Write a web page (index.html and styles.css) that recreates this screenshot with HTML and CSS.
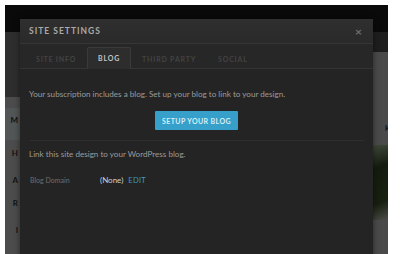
FILE: index.html
```html
<!DOCTYPE html>
<html lang="en">
<head>
  <meta charset="UTF-8" />
  <title>Site Settings</title>
  <link rel="stylesheet" href="styles.css">
</head>
<body>
  <div class="screen">
    <div class="topbar"></div>
    <div class="page">
      <div class="side side-left">
        <span class="band"></span>
        <span class="letter l-m">M</span>
        <span class="letter l-h">H</span>
        <span class="letter l-a">A</span>
        <span class="letter l-r">R</span>
        <span class="letter l-i">I</span>
      </div>
      <div class="side side-right">
        <span class="dark-top"></span>
        <span class="letter l-k">K</span>
        <span class="photo"></span>
      </div>
    </div>

    <div class="modal">
      <div class="modal-head">
        <h2>SITE SETTINGS</h2>
        <span class="close">&times;</span>
      </div>
      <div class="tabs">
        <span class="tab">SITE INFO</span>
        <span class="tab active">BLOG</span>
        <span class="tab">THIRD PARTY</span>
        <span class="tab">SOCIAL</span>
      </div>
      <div class="modal-body">
        <p>Your subscription includes a blog. Set up your blog to link to your design.</p>
        <div class="btn-row">
          <a class="btn">SETUP YOUR BLOG</a>
        </div>
        <hr>
        <p>Link this site design to your WordPress blog.</p>
        <div class="field">
          <span class="label">Blog Domain</span>
          <span class="value">(None)</span>
          <a class="edit">EDIT</a>
        </div>
      </div>
    </div>
  </div>
</body>
</html>
```

FILE: styles.css
```css
html, body {
  margin: 0;
  padding: 0;
  height: 100%;
  overflow: hidden;
  background: #ffffff;
  font-family: 'Lato', 'Open Sans', sans-serif;
}

.screen {
  position: relative;
  margin: 5px 12px 0 5px;
  height: 249px;
  background: #1c1c1c;
  overflow: hidden;
}

.topbar {
  height: 27px;
  background: #0a0a0a;
}

.page {
  display: flex;
  justify-content: space-between;
  height: 222px;
}

.side {
  width: 15px;
  display: flex;
  flex-direction: column;
}

.side-left {
  background: #4c4c4c;
}

.side-left .band {
  height: 65px;
  background: #2e2e2e;
}

.letter {
  font-size: 8px;
  font-weight: 700;
  color: #111;
  line-height: 10px;
  text-align: right;
  padding-right: 2px;
}

.l-m { margin-top: 11px; background: #535656; padding-top: 7px; padding-bottom: 15px; }
.l-h { margin-top: 8px; }
.l-a { margin-top: 17px; }
.l-r { margin-top: 13px; }
.l-i { margin-top: 17px; }

.side-right {
  background: #4a4a4a;
}

.side-right .dark-top {
  height: 20px;
  background: #1e1e1e;
}

.l-k {
  margin-top: 71px;
  text-align: left;
  padding: 0 0 0 12px;
  font-size: 7px;
}

.photo {
  margin-top: 12px;
  height: 75px;
  background: linear-gradient(160deg, #3f4a3a 0%, #141c10 30%, #18200f 75%, #4a4d48 100%);
}

/* modal sits over the dimmed page */
.modal {
  position: absolute;
  top: 14px;
  left: 15px;
  width: 353px;
  height: 260px;
  background: #242424;
  box-shadow: 0 0 6px rgba(0, 0, 0, 0.5);
}

.modal-head {
  display: flex;
  align-items: center;
  justify-content: space-between;
  height: 24px;
  padding: 0 9px;
  background: linear-gradient(#2f2f2f, #2a2a2a);
  border-bottom: 1px solid #363636;
}

.modal-head h2 {
  margin: 0;
  font-size: 8.5px;
  font-weight: 700;
  letter-spacing: 1px;
  color: #a9a9a9;
}

.close {
  font-size: 12px;
  font-weight: 700;
  color: #6e6e6e;
  margin-right: 2px;
}

.tabs {
  display: flex;
  height: 24px;
  padding: 0 5px;
  align-items: flex-end;
  background: #272727;
  border-bottom: 1px solid #343434;
}

.tab {
  height: 20px;
  line-height: 21px;
  padding: 0 10px;
  font-size: 7px;
  font-weight: 700;
  letter-spacing: 0.8px;
  color: #434343;
  border: 1px solid transparent;
  border-bottom: 0;
  margin-bottom: -1px;
}

.tab.active {
  color: #c4c4c4;
  background: #2d2d2d;
  border-color: #3a3a3a;
  border-radius: 2px 2px 0 0;
  height: 21px;
}

.modal-body {
  padding: 20px 9px 0;
}

.modal-body p {
  margin: 0;
  font-size: 8.1px;
  line-height: 10px;
  color: #9b9b9b;
}

.btn-row {
  display: flex;
  justify-content: center;
  margin: 12px 0 10px;
}

.btn {
  display: block;
  width: 83px;
  height: 19px;
  line-height: 20px;
  text-align: center;
  background: #36a0cb;
  border-radius: 1px;
  color: #d8eef6;
  font-size: 7px;
  font-weight: 700;
  letter-spacing: 0.4px;
}

.modal-body hr {
  margin: 0 0 8px;
  border: 0;
  border-top: 1px solid #2e2e2e;
}

.field {
  display: flex;
  align-items: center;
  margin-top: 16px;
  padding-left: 1px;
}

.label {
  width: 70px;
  font-size: 7px;
  color: #6f6f6f;
}

.value {
  font-size: 8px;
  color: #d0d0d0;
  margin-right: 5px;
}

.edit {
  font-size: 7.5px;
  color: #3a9ac6;
  letter-spacing: 0.3px;
}
```
